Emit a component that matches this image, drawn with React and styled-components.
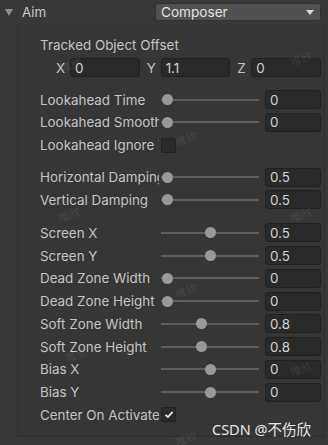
import React from 'react';
import styled, { createGlobalStyle } from 'styled-components';

const GlobalStyle = createGlobalStyle`
  html, body {
    margin: 0;
    padding: 0;
    background: #383838;
  }
  body {
    font-family: Inter, "Noto Sans", "Liberation Sans", sans-serif;
    font-size: 13.4px;
    color: #c4c4c4;
  }
`

const Inspector = styled.div`
  position: relative;
  width: 328px;
  height: 445px;
  overflow: hidden;
  background: #383838;
`

const Header = styled.div`
  display: flex;
  align-items: center;
  height: 24px;
  padding: 0 7px 0 5px;
`

const Foldout = styled.div`
  display: flex;
  align-items: center;
  gap: 9px;
  color: #c8c8c8;
`

const Arrow = styled.span`
  width: 0;
  height: 0;
  border-left: 4.5px solid transparent;
  border-right: 4.5px solid transparent;
  border-top: 7px solid #8f8f8f;
`

const Dropdown = styled.div`
  margin-left: auto;
  width: 166px;
  height: 18px;
  box-sizing: border-box;
  display: flex;
  align-items: center;
  justify-content: space-between;
  padding: 0 6px 0 5px;
  background: #515151;
  border: 1px solid #303030;
  border-radius: 3px;
  color: #e2e2e2;
  font-size: 13.6px;
`

const Caret = styled.span`
  width: 0;
  height: 0;
  border-left: 4px solid transparent;
  border-right: 4px solid transparent;
  border-top: 5px solid #d8d8d8;
`

const Panel = styled.div`
  margin-left: 17px;
  width: 308px;
  height: 413px;
  box-sizing: border-box;
  border-left: 1px solid #2f2f2f;
  border-right: 1px solid #2f2f2f;
  border-bottom: 1px solid #2d2d2d;
  background: #363636;
  padding: 13px 3px 0 22px;
`

const SectionTitle = styled.div`
  height: 16px;
  line-height: 16px;
`

const VectorRow = styled.div`
  display: grid;
  grid-template-columns: repeat(3, 1fr);
  gap: 4px;
  margin: 5px 0 0 13px;
`

const VectorCell = styled.div`
  display: flex;
  align-items: center;
`

const AxisLabel = styled.span`
  width: 17px;
  padding-left: 3px;
  box-sizing: border-box;
`

const Field = styled.div`
  flex: ${p => (p.$grow ? 1 : 'none')};
  min-width: 0;
  height: 19px;
  box-sizing: border-box;
  display: flex;
  align-items: center;
  padding-left: 4px;
  background: #2a2a2a;
  border: 1px solid #212121;
  border-radius: 3px;
  color: #d2d2d2;
`

const Group = styled.div`
  display: flex;
  flex-direction: column;
  gap: 3.75px;
  margin-top: ${p => p.$top}px;
`

const Row = styled.div`
  display: grid;
  grid-template-columns: 121px 104px 56px;
  align-items: center;
  height: 19px;
`

const Label = styled.div`
  width: 119px;
  white-space: nowrap;
  overflow: hidden;
`

const Track = styled.div`
  position: relative;
  width: 98px;
  height: 2px;
  background: #5e5e5e;
`

const Knob = styled.span`
  position: absolute;
  top: 50%;
  width: 11px;
  height: 11px;
  margin: -5.5px 0 0 -5.5px;
  border-radius: 50%;
  background: #999999;
`

const Check = styled.div`
  width: 15px;
  height: 15px;
  box-sizing: border-box;
  background: #2b2b2b;
  border: 1px solid #222;
  border-radius: 2px;
  display: flex;
  align-items: center;
  justify-content: center;
`

const Watermark = styled.span`
  position: absolute;
  transform: rotate(-20deg);
  font-family: "Noto Sans CJK SC", sans-serif;
  font-size: 11px;
  color: rgba(255, 255, 255, 0.1);
  pointer-events: none;
`

const Credit = styled.span`
  position: absolute;
  left: 212px;
  top: 418px;
  font-family: "Noto Sans", "Noto Sans CJK SC", sans-serif;
  font-size: 14.5px;
  color: #e6e6e6;
`

const SliderRow = ({ label, value, pos }) => (
  <Row>
    <Label>{label}</Label>
    <Track>
      <Knob style={{ left: `${6 + pos * 86}px` }} />
    </Track>
    <Field>{value}</Field>
  </Row>
)

const ToggleRow = ({ label, checked }) => (
  <Row>
    <Label>{label}</Label>
    <Check>
      {checked && (
        <svg width="10" height="9" viewBox="0 0 10 9">
          <path d="M1.5 4.8 L3.9 7 L8.6 1.8" fill="none" stroke="#e8e8e8" strokeWidth="1.8" />
        </svg>
      )}
    </Check>
  </Row>
)

const marks = [
  [60, 56], [290, 50], [175, 130], [58, 206], [290, 206],
  [175, 282], [65, 346], [290, 360], [175, 430],
]

export default function App() {
  return (
    <Inspector>
      <GlobalStyle />
      <Header>
        <Foldout>
          <Arrow />
          <span>Aim</span>
        </Foldout>
        <Dropdown>
          Composer
          <Caret />
        </Dropdown>
      </Header>
      <Panel>
        <SectionTitle>Tracked Object Offset</SectionTitle>
        <VectorRow>
          <VectorCell><AxisLabel>X</AxisLabel><Field $grow>0</Field></VectorCell>
          <VectorCell><AxisLabel>Y</AxisLabel><Field $grow>1.1</Field></VectorCell>
          <VectorCell><AxisLabel>Z</AxisLabel><Field $grow>0</Field></VectorCell>
        </VectorRow>
        <Group $top={13}>
          <SliderRow label="Lookahead Time" value="0" pos={0} />
          <SliderRow label="Lookahead Smoothing" value="0" pos={0} />
          <ToggleRow label="Lookahead Ignore Y" checked={false} />
        </Group>
        <Group $top={13}>
          <SliderRow label="Horizontal Damping" value="0.5" pos={0} />
          <SliderRow label="Vertical Damping" value="0.5" pos={0} />
        </Group>
        <Group $top={14}>
          <SliderRow label="Screen X" value="0.5" pos={0.5} />
          <SliderRow label="Screen Y" value="0.5" pos={0.5} />
          <SliderRow label="Dead Zone Width" value="0" pos={0} />
          <SliderRow label="Dead Zone Height" value="0" pos={0} />
          <SliderRow label="Soft Zone Width" value="0.8" pos={0.4} />
          <SliderRow label="Soft Zone Height" value="0.8" pos={0.4} />
          <SliderRow label="Bias X" value="0" pos={0.5} />
          <SliderRow label="Bias Y" value="0" pos={0.5} />
          <ToggleRow label="Center On Activate" checked />
        </Group>
      </Panel>
      {marks.map(([x, y], i) => (
        <Watermark key={i} style={{ left: x, top: y }}>唯欣</Watermark>
      ))}
      <Credit>CSDN @不伤欣</Credit>
    </Inspector>
  );
}
